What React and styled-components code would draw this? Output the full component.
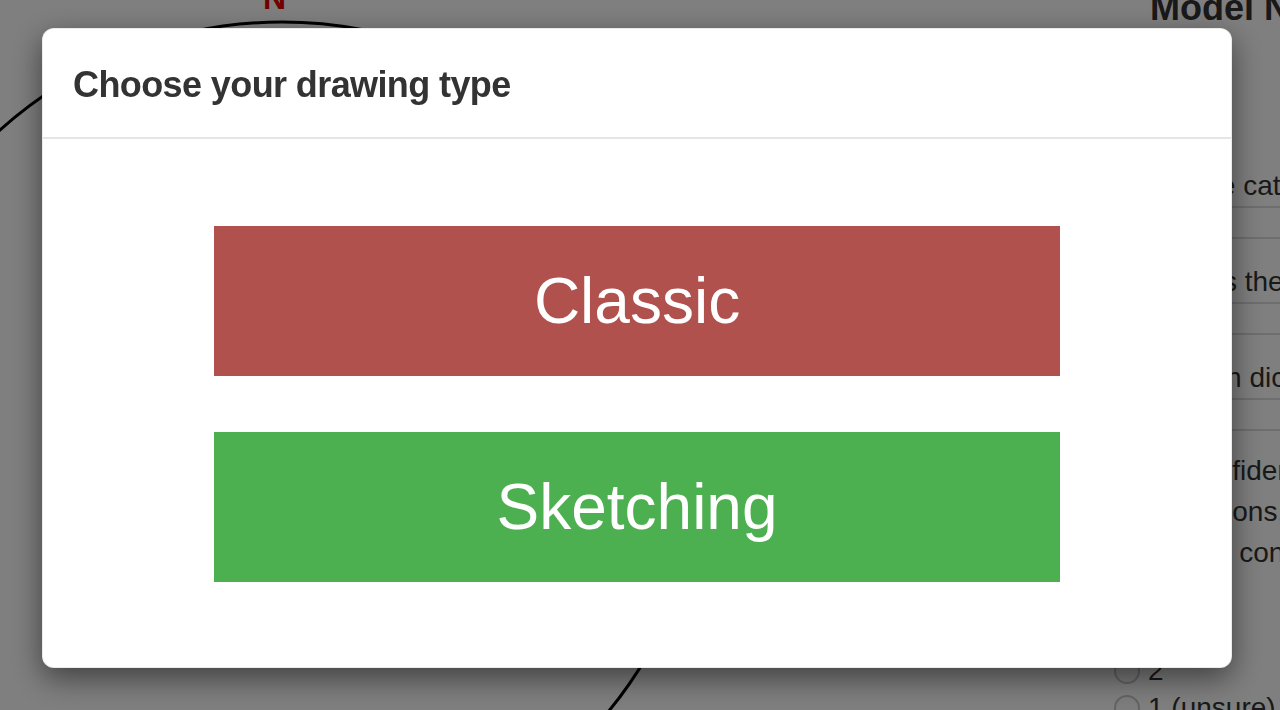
import React from "react";
import styled, { createGlobalStyle } from "styled-components";

const GlobalStyle = createGlobalStyle`
  html, body {
    margin: 0;
    padding: 0;
    width: 1280px;
    height: 710px;
    overflow: hidden;
    background: #ffffff;
    font-family: "Liberation Sans", Arial, Helvetica, sans-serif;
    color: #333333;
  }
`;

const Page = styled.div`
  display: flex;
  width: 1280px;
  height: 710px;
  overflow: hidden;
`;

const CanvasArea = styled.div`
  flex: 0 0 1114px;
  height: 710px;
`;

const SideColumn = styled.div`
  flex: 0 0 420px;
  display: flex;
  flex-direction: column;
  font-size: 28px;
  line-height: 40px;
  color: #333333;
`;

const Heading = styled.h2`
  margin: -12px 0 0 36px;
  font-size: 36px;
  line-height: 40px;
  font-weight: bold;
  white-space: nowrap;
`;

const Questions = styled.div`
  display: flex;
  flex-direction: column;
  gap: 23px;
  margin-top: 138px;
`;

const Question = styled.div`
  display: flex;
  flex-direction: column;
`;

const Label = styled.div`
  white-space: nowrap;
`;

const TextInput = styled.div`
  height: 33px;
  box-sizing: border-box;
  border: 2px solid #dcdcdc;
  border-radius: 6px;
`;

const Paragraph = styled.p`
  margin: 19px 0 0;
  line-height: 41px;
  white-space: nowrap;
`;

const RadioList = styled.div`
  display: flex;
  flex-direction: column;
  margin-top: 5px;
`;

const RadioRow = styled.label`
  display: flex;
  align-items: center;
  gap: 8px;
  height: 37px;
  line-height: 37px;
  white-space: nowrap;
`;

const RadioCircle = styled.span`
  width: 26px;
  height: 26px;
  box-sizing: border-box;
  border-radius: 50%;
  border: 2px solid #c8c8c8;
  background: #fafafa;
  flex: 0 0 auto;
`;

const Backdrop = styled.div`
  position: fixed;
  inset: 0;
  background: rgba(0, 0, 0, 0.5);
  display: flex;
  align-items: flex-start;
  padding: 28px 0 0 42px;
  box-sizing: border-box;
`;

const Modal = styled.div`
  width: 1190px;
  height: 640px;
  box-sizing: border-box;
  background: #ffffff;
  border: 1px solid rgba(0, 0, 0, 0.08);
  border-radius: 12px;
  box-shadow: 0 10px 30px rgba(0, 0, 0, 0.5);
  display: flex;
  flex-direction: column;
`;

const ModalHeader = styled.div`
  padding: 30px 30px 27px 30px;
  border-bottom: 2px solid #e5e5e5;
`;

const ModalTitle = styled.h4`
  margin: 0;
  font-size: 36px;
  line-height: 51px;
  font-weight: bold;
  letter-spacing: -0.6px;
  color: #333333;
`;

const ModalBody = styled.div`
  flex: 1;
  display: flex;
  flex-direction: column;
  gap: 56px;
  padding: 87px 171px 85px;
`;

const ChoiceButton = styled.button`
  height: 150px;
  border: none;
  border-radius: 0;
  margin: 0;
  padding: 0;
  background: ${(p) => p.$color};
  color: #ffffff;
  font-family: "Liberation Sans", Arial, Helvetica, sans-serif;
  font-size: 64px;
  font-weight: normal;
  cursor: pointer;
`;

export default function App() {
  return (
    <>
      <GlobalStyle />
      <Page>
        <CanvasArea>
          <svg width="1114" height="710" viewBox="0 0 1114 710">
            <circle cx="282" cy="444" r="422" fill="none" stroke="#000" strokeWidth="3" />
            <text
              x="263"
              y="9"
              fontFamily="Liberation Sans, Arial, sans-serif"
              fontWeight="bold"
              fontSize="32"
              fill="#e60000"
            >
              N
            </text>
          </svg>
        </CanvasArea>
        <SideColumn>
          <Heading>Model Notes</Heading>
          <Questions>
            <Question>
              <Label>Name the category</Label>
              <TextInput />
            </Question>
            <Question>
              <Label>What was the shape?</Label>
              <TextInput />
            </Question>
            <Question>
              <Label>Entered in dictionary?</Label>
              <TextInput />
            </Question>
          </Questions>
          <Paragraph>
            What confidence level
            <br />
            the decisions, on a scale
            <br />
            (4 = most confident)?
          </Paragraph>
          <RadioList>
            <RadioRow><RadioCircle />4</RadioRow>
            <RadioRow><RadioCircle />3</RadioRow>
            <RadioRow><RadioCircle />2</RadioRow>
            <RadioRow><RadioCircle />1 (unsure)</RadioRow>
          </RadioList>
        </SideColumn>
      </Page>
      <Backdrop>
        <Modal>
          <ModalHeader>
            <ModalTitle>Choose your drawing type</ModalTitle>
          </ModalHeader>
          <ModalBody>
            <ChoiceButton $color="#b0514d">Classic</ChoiceButton>
            <ChoiceButton $color="#4caf50">Sketching</ChoiceButton>
          </ModalBody>
        </Modal>
      </Backdrop>
    </>
  );
}
